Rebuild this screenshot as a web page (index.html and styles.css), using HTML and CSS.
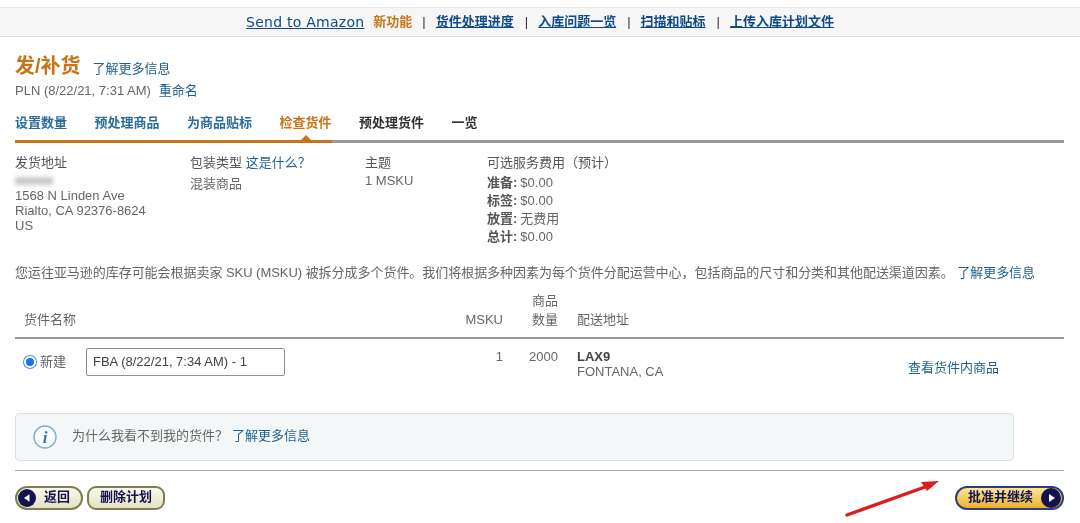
FILE: index.html
```html
<!DOCTYPE html>
<html lang="zh">
<head>
<meta charset="utf-8">
<title>发/补货</title>
<link rel="stylesheet" href="styles.css">
</head>
<body>
<nav class="topbar">
  <a class="send" href="#">Send to Amazon</a>
  <span class="new">新功能</span>
  <span class="sep">|</span><a href="#">货件处理进度</a>
  <span class="sep">|</span><a href="#">入库问题一览</a>
  <span class="sep">|</span><a href="#">扫描和贴标</a>
  <span class="sep">|</span><a href="#">上传入库计划文件</a>
</nav>
<main class="page">
  <header class="head">
    <div class="title-row"><h1>发/补货</h1><a href="#">了解更多信息</a></div>
    <div class="plan-row"><span>PLN (8/22/21, 7:31 AM)</span><a href="#">重命名</a></div>
  </header>
  <div class="tabs">
    <a href="#">设置数量</a>
    <a href="#">预处理商品</a>
    <a href="#">为商品贴标</a>
    <span class="cur">检查货件</span>
    <span class="todo">预处理货件</span>
    <span class="todo">一览</span>
  </div>
  <div class="progress"><i class="done"></i><i class="caret"></i></div>
  <section class="details">
    <div class="col c1">
      <h2>发货地址</h2>
      <div class="blurred"></div>
      <p>1568 N Linden Ave<br>Rialto, CA 92376-8624<br>US</p>
    </div>
    <div class="col c2">
      <h2>包装类型 <a href="#">这是什么？</a></h2>
      <p class="mix">混装商品</p>
    </div>
    <div class="col c3">
      <h2>主题</h2>
      <p>1 MSKU</p>
    </div>
    <div class="col c4">
      <h2>可选服务费用（预计）</h2>
      <dl>
        <div><dt>准备:</dt><dd>$0.00</dd></div>
        <div><dt>标签:</dt><dd>$0.00</dd></div>
        <div><dt>放置:</dt><dd>无费用</dd></div>
        <div><dt>总计:</dt><dd>$0.00</dd></div>
      </dl>
    </div>
  </section>
  <p class="notice">您运往亚马逊的库存可能会根据卖家 SKU (MSKU) 被拆分成多个货件。我们将根据多种因素为每个货件分配运营中心，包括商品的尺寸和分类和其他配送渠道因素。 <a href="#">了解更多信息</a></p>
  <div class="grid thead">
    <span class="g-name">货件名称</span>
    <span class="g-msku">MSKU</span>
    <span class="g-qty">商品<br>数量</span>
    <span class="g-dest">配送地址</span>
  </div>
  <div class="grid trow">
    <label class="radio"><i class="dot"></i>新建</label>
    <span class="field">FBA (8/22/21, 7:34 AM) - 1</span>
    <span class="g-msku val">1</span>
    <span class="g-qty val">2000</span>
    <span class="g-dest val"><b>LAX9</b><br>FONTANA, CA</span>
    <a class="view" href="#">查看货件内商品</a>
  </div>
  <div class="info">
    <svg class="info-icon" width="24" height="24" viewBox="0 0 24 24"><circle cx="12" cy="12" r="11" fill="#fafcfd" stroke="#7fb0c4" stroke-width="1.4"/><text x="12" y="17.5" text-anchor="middle" class="i-glyph">i</text></svg>
    <span class="info-text">为什么我看不到我的货件？</span><a class="info-text" href="#">了解更多信息</a>
  </div>
  <hr class="rule">
  <footer class="actions">
    <div class="left">
      <button class="btn back" type="button">
        <svg width="18" height="18" viewBox="0 0 18 18"><circle cx="9" cy="9" r="9" fill="#13134f"/><path d="M11.5 5.2v7.6L6 9z" fill="#fff"/></svg>
        <span class="btn-label">返回</span>
      </button>
      <button class="btn del" type="button"><span class="btn-label">删除计划</span></button>
    </div>
    <button class="btn go" type="button">
      <span class="btn-label">批准并继续</span>
      <svg width="20" height="20" viewBox="0 0 20 20"><circle cx="10" cy="10" r="10" fill="#13134f"/><path d="M8 6l6 4-6 4z" fill="#fff"/></svg>
    </button>
  </footer>
</main>
<svg class="arrow" width="100" height="40" viewBox="0 0 100 40"><path d="M2 37L80 9" stroke="#e01b1b" stroke-width="3.4" stroke-linecap="round"/><path d="M94 3L76 4 82 13z" fill="#e01b1b"/></svg>
</body>
</html>
```
FILE: styles.css
```css
* { box-sizing: border-box; }
html, body { margin: 0; padding: 0; }
body {
  width: 1080px;
  height: 523px;
  overflow: hidden;
  position: relative;
  background: #fff;
  color: #666;
  font: 13px/18px "Liberation Sans", "Noto Sans CJK SC", sans-serif;
  filter: blur(.35px);
}
a { color: #1f5f8f; text-decoration: none; }
h1, h2, p, dl, dd { margin: 0; font-weight: normal; }

.topbar {
  margin-top: 7px;
  height: 30px;
  background: #f6f6f6;
  border-top: 1px solid #e8e8e8;
  border-bottom: 1px solid #dedede;
  display: flex;
  justify-content: center;
  align-items: center;
  font-weight: bold;
  color: #333;
}
.topbar a { color: #0f4a8a; text-decoration: underline; }
.topbar .send { font: 14px "DejaVu Sans", sans-serif; letter-spacing: .25px; margin-right: 9px; }
.topbar .new { color: #c8751a; margin-right: 10px; }
.topbar .sep { font-weight: normal; margin-right: 10px; }
.topbar a + .sep { margin-left: 11px; }

.page { padding: 0 16px 0 15px; }
.head { padding-top: 14px; }
.title-row { display: flex; align-items: baseline; gap: 12px; height: 30px; }
h1 { font-size: 20px; line-height: 30px; font-weight: bold; color: #c8751a; }
.plan-row { display: flex; gap: 8px; height: 20px; line-height: 20px; }

.tabs { display: flex; gap: 27.5px; margin-top: 13px; height: 18px; font-weight: bold; }
.tabs a { color: #2a6c9c; }
.tabs .cur { color: #c8751a; }
.tabs .todo { color: #333; }
.progress { position: relative; height: 3px; margin-top: 8px; background: #999; }
.progress .done { display: block; width: 317px; height: 3px; background: #c8751a; }
.progress .caret {
  position: absolute; left: 286px; top: -5px;
  border: 5px solid transparent; border-top: 0; border-bottom: 5px solid #c8751a;
}

.details { display: flex; margin-top: 11px; height: 97px; }
.col h2 { font-size: 13px; line-height: 18px; color: #555; }
.c1 { width: 175px; }
.c2 { width: 175px; }
.c3 { width: 122px; }
.col p { line-height: 15px; }
.blurred { width: 38px; height: 8px; margin-top: 5px; background: #c9c9c9; filter: blur(2px); }
.c1 p { margin-top: 3px; }
.c2 .mix { margin-top: 4px; }
.c3 p { margin-top: 1px; }
dl { margin-top: 2px; }
dl div { display: flex; gap: 3px; height: 18px; line-height: 18px; }
dt { font-weight: bold; color: #555; }

.notice { margin-top: 13px; white-space: nowrap; line-height: 18px; letter-spacing: -.04px; }

.grid { display: grid; grid-template-columns: 71px 199px 218px 55px 19px 331px 91px 1fr; }
.g-msku { grid-column: 3; text-align: right; }
.g-qty { grid-column: 4; text-align: right; }
.g-dest { grid-column: 6; }
.thead {
  height: 57px;
  border-bottom: 2px solid #999;
  align-items: end;
  padding-bottom: 8px;
  line-height: 19px;
}
.g-name { grid-column: 1 / span 2; padding-left: 9px; }
.trow { height: 74px; padding-top: 9px; align-items: start; }
.radio { display: flex; align-items: center; gap: 4px; height: 28px; padding-left: 9px; }
.dot {
  width: 12px; height: 12px; border-radius: 50%;
  background: #1a73e8; border: 2px solid #fff; box-shadow: 0 0 0 1px #4a90d9;
}
.field {
  display: flex; align-items: center;
  height: 28px; padding-left: 6px;
  border: 1px solid #8f8f8f; border-radius: 2px; color: #444;
}
.val { line-height: 15px; white-space: nowrap; padding-top: 1px; }
.val b { color: #444; }
.view { grid-column: 7; padding-top: 11px; white-space: nowrap; }

.info {
  width: 999px; height: 48px;
  display: flex; align-items: center;
  background: #f4f7f8; border: 1px solid #d8e2e5; border-radius: 4px;
  padding-left: 17px;
}
.info-icon { margin-right: 15px; }
.info-text { margin-top: -2px; }
.i-glyph { font: italic bold 17px "Liberation Serif", serif; fill: #2a7fa8; }
.info a { margin-left: 4px; }
.rule { height: 1px; margin: 9px 0 0; border: 0; background: #aaa; }

.actions { display: flex; justify-content: space-between; margin-top: 15px; }
.left { display: flex; gap: 4px; }
.btn {
  display: flex; align-items: center; justify-content: center;
  height: 24px; padding: 0;
  font: bold 13px/16px "Liberation Sans", "Noto Sans CJK SC", sans-serif;
  color: #13134f;
  border: 2px solid #7e7e52; border-radius: 9px;
  background: linear-gradient(#faf9ee, #e4e1c4);
}
.btn-label { margin-top: -3px; }
.back { width: 68px; gap: 8px; justify-content: flex-start; padding-left: 1px; border-radius: 12px; }
.del { width: 78px; }
.go {
  width: 109px; gap: 8px; justify-content: flex-end; padding-right: 1px;
  border: 2px solid #2f3f78; border-radius: 12px;
  background: linear-gradient(#fbe59a, #eeb12c);
}
.arrow { position: absolute; left: 845px; top: 478px; }
```
